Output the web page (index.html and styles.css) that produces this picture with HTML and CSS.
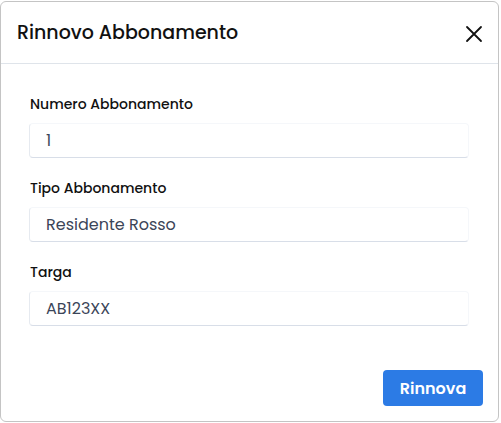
FILE: index.html
```html
<!DOCTYPE html>
<html lang="it">
<head>
<meta charset="utf-8">
<title>Rinnovo Abbonamento</title>
<link rel="stylesheet" href="styles.css">
</head>
<body>
<div class="modal">
  <div class="modal-header">
    <h1 class="modal-title">Rinnovo Abbonamento</h1>
    <button class="close" aria-label="Chiudi">
      <svg width="18" height="18" viewBox="0 0 18 18"><path d="M2 2 L16 16 M16 2 L2 16" stroke="#111" stroke-width="1.8" fill="none" stroke-linecap="round"/></svg>
    </button>
  </div>
  <div class="modal-body">
    <div class="field">
      <label class="label">Numero Abbonamento</label>
      <div class="input">1</div>
    </div>
    <div class="field">
      <label class="label">Tipo Abbonamento</label>
      <div class="input">Residente Rosso</div>
    </div>
    <div class="field">
      <label class="label">Targa</label>
      <div class="input">AB123XX</div>
    </div>
  </div>
  <div class="modal-footer">
    <button class="btn">Rinnova</button>
  </div>
</div>
</body>
</html>
```
FILE: styles.css
```css
* { box-sizing: border-box; }
html, body { margin: 0; padding: 0; background: #fff; }
body {
  font-family: "Poppins", "Inter", "Noto Sans", sans-serif;
  width: 501px;
  height: 423px;
  overflow: hidden;
}
.modal {
  width: 499px;
  height: 421px;
  margin-top: 1px;
  border: 1px solid #c4c4c4;
  border-radius: 6px;
  background: #fff;
  display: flex;
  flex-direction: column;
}
.modal-header {
  height: 62px;
  border-bottom: 1px solid #dfe4ea;
  display: flex;
  align-items: center;
  justify-content: space-between;
  padding: 0 14px 0 16px;
}
.modal-title {
  margin: 0;
  font-size: 19px;
  font-weight: 500;
  color: #111;
}
.close {
  border: 0;
  background: none;
  padding: 0;
  width: 20px;
  height: 20px;
  display: flex;
  align-items: center;
  justify-content: center;
  margin-top: 2px;
}
.modal-body {
  padding: 30px 28px 0 28px;
  display: flex;
  flex-direction: column;
  gap: 20px;
}
.field {
  display: flex;
  flex-direction: column;
  gap: 8px;
}
.label {
  font-size: 14px;
  line-height: 21px;
  font-weight: 500;
  color: #111;
  padding-left: 1px;
}
.input {
  height: 35px;
  width: 440px;
  border: 1px solid #f5f7fa;
  border-left-color: #e6eaf0;
  border-bottom-color: #d8dee8;
  border-radius: 4px;
  padding: 0 16px;
  display: flex;
  align-items: center;
  font-size: 16px;
  color: #3b4558;
}
.modal-footer {
  margin-top: auto;
  display: flex;
  justify-content: flex-end;
  padding: 0 15px 15px 0;
}
.btn {
  width: 100px;
  height: 36px;
  border: 0;
  border-radius: 4px;
  background: #2c7be5;
  color: #fff;
  font-family: inherit;
  font-size: 16px;
  font-weight: 600;
}
```
